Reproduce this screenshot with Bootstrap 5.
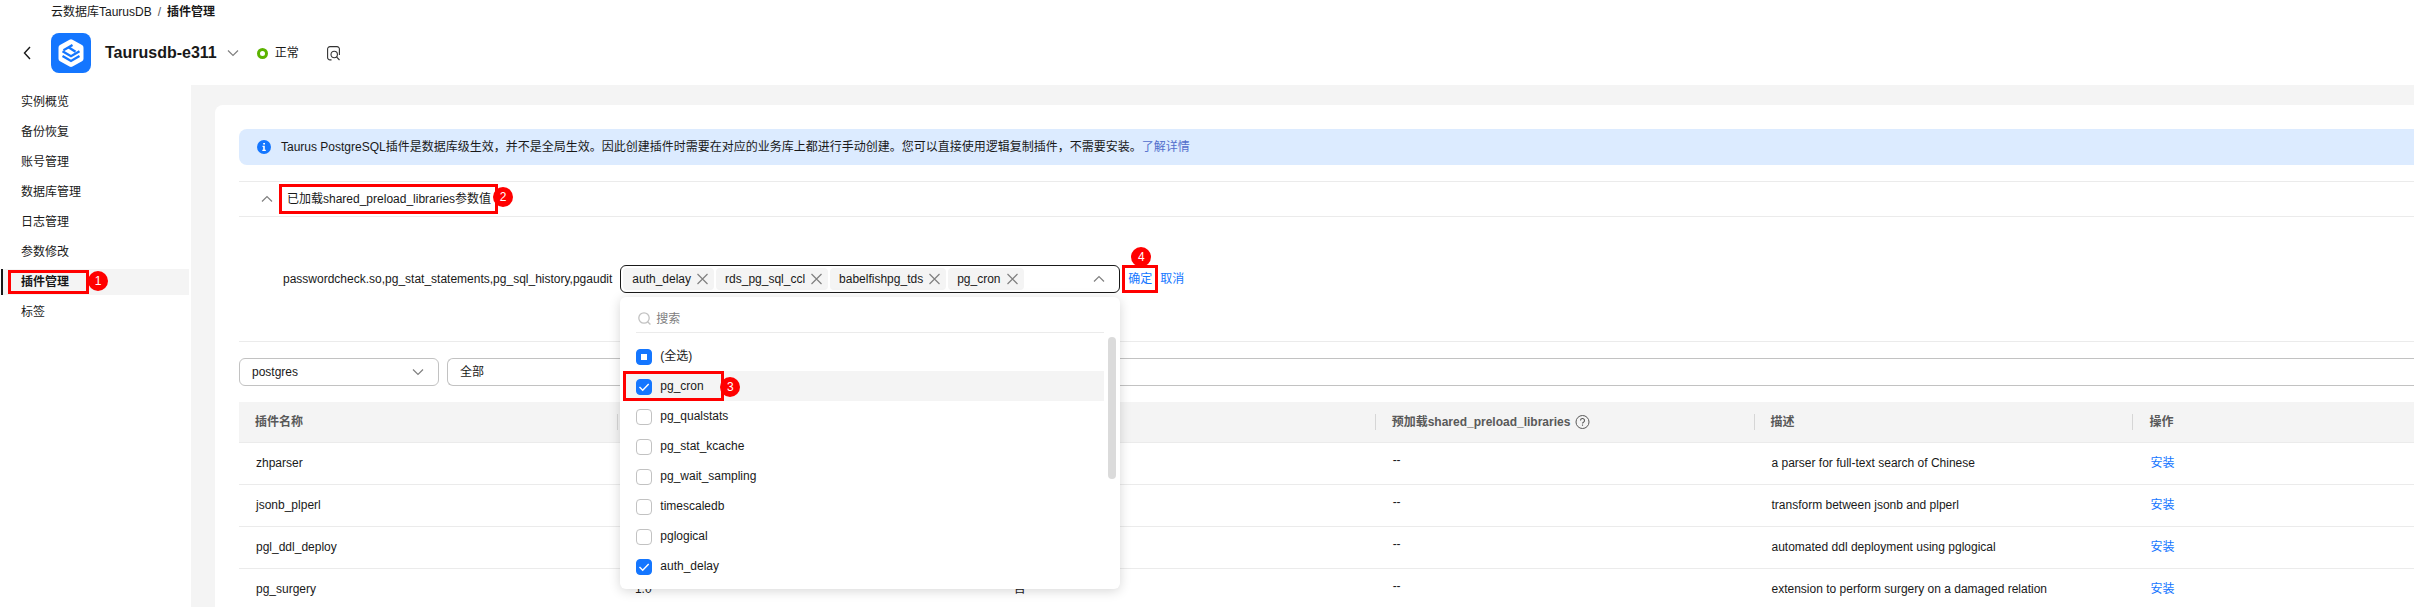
<!DOCTYPE html>
<html lang="zh-CN">
<head>
<meta charset="utf-8">
<meta name="viewport" content="width=device-width, initial-scale=1">
<title>插件管理 - 云数据库TaurusDB</title>
<link href="https://cdn.jsdelivr.net/npm/bootstrap@5.3.0/dist/css/bootstrap.min.css" rel="stylesheet">
<style>
  :root { --ink: #191919; --line: #ebebeb; --pane: #f4f4f4; --brand: #1476ff; --ctl: #c2c2c2; }
  body { font: 12px/20px "Liberation Sans", "Noto Sans CJK SC", sans-serif; color: var(--ink); background: #fff; }
  a, .link-btn { color: var(--brand); text-decoration: none; }
  svg { display: block; flex: none; }
  .link-btn { border: 0; background: none; padding: 0; font-size: 12px; line-height: 20px; }
  .icon-btn { border: 0; background: none; padding: 0; color: #808080; }

  .top-bar { padding: 2px 24px 12px 23px; }
  .crumbs { padding-left: 28px; margin-bottom: 11px; }
  .crumbs a { color: var(--ink); }
  .crumbs span { padding: 0 6px; color: #595959; }
  .inst-row { height: 40px; }
  .inst-logo { margin-left: 20px; }
  .inst-name { font-size: 16px; line-height: 24px; margin: 0 10px 0 14px; font-weight: 700; }
  .state-dot { width: 11px; height: 11px; border: 3px solid #5cb300; border-radius: 50%; margin: 0 7px 0 18px; }
  .query-btn { margin-left: 28px; }

  .body-row { min-height: 0; }
  .side { width: 191px; padding: 4px 2px 0 1px; flex: none; }
  .side a { display: flex; align-items: center; height: 26px; margin: 0 0 4px; padding-left: 18px; border-left: 2px solid transparent; color: var(--ink); }
  .side a.on { background: var(--pane); border-left-color: var(--ink); font-weight: 700; }
  .work { background: var(--pane); padding: 20px 0 0 24px; min-width: 0; }
  .sheet { background: #fff; border-top-left-radius: 8px; padding: 24px 0 0 24px; }
  .notice { height: 36px; background: #dcebff; border-radius: 8px 0 0 8px; padding-left: 18px; gap: 10px; margin-bottom: 16px; }
  .notice a { color: #526ecc; }

  .fold-head { height: 36px; border-top: 1px solid var(--line); border-bottom: 1px solid var(--line); padding-left: 22px; gap: 14px; }
  .fold-body { height: 125px; border-bottom: 1px solid var(--line); padding-left: 44px; gap: 8px; }
  .picker { width: 500px; }
  .picker-box { height: 28px; border: 1px solid var(--ink); border-radius: 6px; padding: 2px 14px 2px 2px; gap: 2px; cursor: pointer; }
  .chip { height: 22px; background: var(--pane); border-radius: 4px; padding: 0 6px 0 9px; gap: 6px; }
  .drop { position: absolute; top: 32px; left: 0; right: 0; z-index: 5; height: 292px; background: #fff; border-radius: 6px; box-shadow: 0 2px 12px rgba(0,0,0,.16); padding: 8px 16px 0; }
  .drop-search { height: 28px; border-bottom: 1px solid var(--line); gap: 5px; padding-left: 2px; }
  .drop-search input { border: 0; padding: 0; outline: 0; flex: 1; line-height: 20px; }
  .drop-search input::placeholder { color: #808080; }
  .opt { height: 30px; margin: 0; gap: 8px; }
  .opt.hot { background: var(--pane); margin-left: -13px; padding-left: 13px; }
  .opt .form-check-input { width: 16px; height: 16px; margin: 2px 0 0; border: 1px solid var(--ctl); border-radius: 4px; flex: none; }
  .opt .form-check-input:checked, .opt .form-check-input:indeterminate { background-color: var(--brand); border-color: var(--brand); background-size: 16px 16px; background-position: center; }
  .opt .form-check-input:checked { background-image: url("data:image/svg+xml,%3Csvg xmlns='http://www.w3.org/2000/svg' viewBox='0 0 16 16'%3E%3Cpath d='M3.5 8l3.2 3.3 6-6.4' fill='none' stroke='%23fff' stroke-width='1.4'/%3E%3C/svg%3E"); }
  .opt .form-check-input:indeterminate { background-image: url("data:image/svg+xml,%3Csvg xmlns='http://www.w3.org/2000/svg' viewBox='0 0 16 16'%3E%3Cpath d='M5 5h6v6H5z' fill='%23fff'/%3E%3C/svg%3E"); }
  .thumb { position: absolute; right: 4px; top: 40px; width: 8px; height: 142px; border-radius: 4px; background: #dbdbdb; }

  .filters { margin: 16px 0; gap: 8px; }
  .filters .form-select { height: 28px; border: 1px solid var(--ctl); border-radius: 6px; padding: 3px 36px 3px 12px; font-size: 12px; line-height: 20px; color: var(--ink);
    background-image: url("data:image/svg+xml,%3Csvg xmlns='http://www.w3.org/2000/svg' viewBox='0 0 12 12'%3E%3Cpath d='M1 3.5l5 5 5-5' fill='none' stroke='%23808080' stroke-width='1.2'/%3E%3C/svg%3E"); background-size: 12px; background-position: right 14px center; }
  .filters .db-pick { width: 200px; flex: none; }
  .filters .type-pick { border-right: 0; border-radius: 6px 0 0 6px; background-image: none; }

  .plugins { table-layout: fixed; margin: 0; color: var(--ink); }
  .plugins th { background: var(--pane); color: #595959; height: 40px; padding: 0 16px; vertical-align: middle; border-bottom: 1px solid var(--line); position: relative; }
  .plugins th:not(:last-child)::after { content: ""; position: absolute; right: 0; top: 12px; height: 16px; width: 1px; background: #d6d6d6; }
  .plugins td { height: 42px; padding: 0 17px; vertical-align: middle; border-bottom: 1px solid var(--line); }
  .plugins td.none { padding-bottom: 6px; }
  .col-std { width: 17.42%; }

  /* numbered red callouts for the tutorial steps */
  .step { position: relative; }
  .step-frame { position: absolute; border: 3px solid #f00; z-index: 7; pointer-events: none; }
  .step-num { position: absolute; z-index: 6; width: 20px; height: 20px; border-radius: 50%; background: #f00; color: #fff; text-align: center; font-weight: 400; font-size: 12px; line-height: 20px; }
  .f1 { left: 5px; right: 100px; top: 1px; bottom: 1px; } .n1 { left: 85px; top: 2px; }
  .f2 { left: -8px; right: -7px; top: -5px; bottom: -5px; } .n2 { right: -22px; top: -2px; }
  .f3 { left: 0; width: 101px; top: 0; bottom: 0; } .n3 { left: 97px; top: 6px; }
  .f4 { left: -6px; right: -6px; top: -4px; bottom: -4px; } .n4 { left: 3px; top: -22px; }
</style>
</head>
<body>
<div class="d-flex flex-column vh-100 overflow-hidden">
  <header class="top-bar">
    <nav class="crumbs d-flex" aria-label="breadcrumb"><a href="#">云数据库TaurusDB</a><span>/</span><strong>插件管理</strong></nav>
    <div class="inst-row d-flex align-items-center">
      <button class="icon-btn" aria-label="返回"><svg width="8" height="14" viewBox="0 0 8 14" fill="none" stroke="#191919" stroke-width="1.4"><path d="M7 1L1.500 7 7 13"/></svg></button>
      <svg class="inst-logo" width="40" height="40" viewBox="0 0 40 40"><rect width="40" height="40" rx="8" fill="#1476ff"/><path d="M18.500 6.700q1.500-.9 3 0l9.500 5.400q1.500.9 1.500 2.600v11q0 1.700-1.500 2.600L21.500 33.500q-1.500.9-3 0L9 28.300q-1.500-.9-1.500-2.600v-11q0-1.700 1.500-2.600z" fill="#fff"/><g fill="none" stroke="#1476ff" stroke-width="2.300"><path d="M11.500 18.200l8.500 5 8.500-5M11.500 22.900l8.500 5 8.500-5"/><path d="M12.500 17.200l9-5.200" stroke-width="2.400"/><path d="M17.500 14.200l7 4.600" stroke-width="2.400"/></g></svg>
      <h1 class="inst-name">Taurusdb-e311</h1>
      <button class="icon-btn" aria-label="切换实例"><svg width="12" height="8" viewBox="0 0 12 8" fill="none" stroke="#808080" stroke-width="1.200"><path d="M1 1.500l5 5 5-5"/></svg></button>
      <span class="state-dot"></span><span>正常</span>
      <button class="icon-btn query-btn" aria-label="查询"><svg width="13" height="15" viewBox="0 0 13 15" fill="none" stroke="#333" stroke-width="1.100"><path d="M4.500 13.900H3a2.400 2.400 0 0 1-2.400-2.400V3A2.400 2.400 0 0 1 3 .6h7A2.400 2.400 0 0 1 12.400 3v6"/><circle cx="7.200" cy="8.500" r="3.200"/><path d="M9.500 10.800l3 3.200"/></svg></button>
    </div>
  </header>
  <div class="body-row d-flex flex-grow-1">
    <nav class="side">
      <a href="#">实例概览</a>
      <a href="#">备份恢复</a>
      <a href="#">账号管理</a>
      <a href="#">数据库管理</a>
      <a href="#">日志管理</a>
      <a href="#">参数修改</a>
      <a href="#" class="on step" aria-current="page">插件管理<span class="step-num n1">1</span><span class="step-frame f1"></span></a>
      <a href="#">标签</a>
    </nav>
    <main class="work flex-grow-1">
      <div class="sheet">
        <div class="notice d-flex align-items-center">
          <svg width="14" height="14" viewBox="0 0 14 14"><circle cx="7" cy="7" r="7" fill="#1476ff"/><path d="M6.200 3h1.800v1.500H6.200zM5.500 5.800h2.300v4h1v1.200H5.300V9.800h.9V7h-.7z" fill="#fff"/></svg>
          <span>Taurus PostgreSQL插件是数据库级生效，并不是全局生效。因此创建插件时需要在对应的业务库上都进行手动创建。您可以直接使用逻辑复制插件，不需要安装。<a href="#">了解详情</a></span>
        </div>
        <div class="fold-head d-flex align-items-center">
          <button class="icon-btn" aria-label="收起"><svg width="12" height="8" viewBox="0 0 12 8" fill="none" stroke="#808080" stroke-width="1.200"><path d="M1 6.500l5-5 5 5"/></svg></button>
          <span class="step">已加载shared_preload_libraries参数值<span class="step-num n2">2</span><span class="step-frame f2"></span></span>
        </div>
        <div class="fold-body d-flex align-items-center">
          <span>passwordcheck.so,pg_stat_statements,pg_sql_history,pgaudit</span>
          <div class="picker position-relative">
            <div class="picker-box d-flex align-items-center" role="combobox" aria-expanded="true" aria-label="预加载库" tabindex="0">
              <span class="chip d-flex align-items-center">auth_delay<button class="icon-btn" aria-label="移除 auth_delay"><svg width="11" height="12" viewBox="0 0 11 12" stroke="#808080" stroke-width="1.200"><path d="M.5 1l10 10M10.500 1l-10 10"/></svg></button></span>
              <span class="chip d-flex align-items-center">rds_pg_sql_ccl<button class="icon-btn" aria-label="移除 rds_pg_sql_ccl"><svg width="11" height="12" viewBox="0 0 11 12" stroke="#808080" stroke-width="1.200"><path d="M.5 1l10 10M10.500 1l-10 10"/></svg></button></span>
              <span class="chip d-flex align-items-center">babelfishpg_tds<button class="icon-btn" aria-label="移除 babelfishpg_tds"><svg width="11" height="12" viewBox="0 0 11 12" stroke="#808080" stroke-width="1.200"><path d="M.5 1l10 10M10.500 1l-10 10"/></svg></button></span>
              <span class="chip d-flex align-items-center">pg_cron<button class="icon-btn" aria-label="移除 pg_cron"><svg width="11" height="12" viewBox="0 0 11 12" stroke="#808080" stroke-width="1.200"><path d="M.5 1l10 10M10.500 1l-10 10"/></svg></button></span>
              <svg class="ms-auto" width="12" height="8" viewBox="0 0 12 8" fill="none" stroke="#808080" stroke-width="1.200"><path d="M1 6.500l5-5 5 5"/></svg>
            </div>
            <div class="drop">
              <label class="drop-search d-flex align-items-center"><svg width="13" height="13" viewBox="0 0 13 13" fill="none" stroke="#c2c2c2" stroke-width="1.300"><circle cx="6" cy="6" r="5.200"/><path d="M9.600 9.800l2.800 2.700"/></svg><input type="text" placeholder="搜索" aria-label="搜索"></label>
              <div class="pt-2">
                <label class="opt d-flex align-items-center"><input class="form-check-input" type="checkbox" id="optAll"><span>(全选)</span></label>
                <label class="opt hot step d-flex align-items-center"><input class="form-check-input" type="checkbox" checked><span>pg_cron</span><span class="step-num n3">3</span><span class="step-frame f3"></span></label>
                <label class="opt d-flex align-items-center"><input class="form-check-input" type="checkbox"><span>pg_qualstats</span></label>
                <label class="opt d-flex align-items-center"><input class="form-check-input" type="checkbox"><span>pg_stat_kcache</span></label>
                <label class="opt d-flex align-items-center"><input class="form-check-input" type="checkbox"><span>pg_wait_sampling</span></label>
                <label class="opt d-flex align-items-center"><input class="form-check-input" type="checkbox"><span>timescaledb</span></label>
                <label class="opt d-flex align-items-center"><input class="form-check-input" type="checkbox"><span>pglogical</span></label>
                <label class="opt d-flex align-items-center"><input class="form-check-input" type="checkbox" checked><span>auth_delay</span></label>
              </div>
              <span class="thumb"></span>
            </div>
          </div>
          <button class="link-btn step">确定<span class="step-num n4">4</span><span class="step-frame f4"></span></button>
          <button class="link-btn">取消</button>
        </div>
        <div class="filters d-flex">
          <select class="form-select db-pick" aria-label="数据库"><option>postgres</option></select>
          <select class="form-select type-pick" aria-label="类型"><option>全部</option></select>
        </div>
        <table class="table plugins">
          <colgroup><col class="col-std"><col class="col-std"><col class="col-std"><col class="col-std"><col class="col-std"><col></colgroup>
          <thead><tr><th>插件名称</th><th></th><th></th>
            <th><span class="d-flex align-items-center">预加载shared_preload_libraries<svg class="ms-1" width="16" height="16" viewBox="0 0 16 16" fill="none" stroke="#595959"><circle cx="8.500" cy="8" r="6.500"/><path d="M6.500 6.500a2 2 0 1 1 3 1.700q-1 .5-1 1.400M8.500 10.600v1.200" stroke-width="1.100"/></svg></span></th>
            <th>描述</th><th>操作</th></tr></thead>
          <tbody>
            <tr><td>zhparser</td><td></td><td></td><td class="none">--</td><td>a parser for full-text search of Chinese</td><td><a href="#">安装</a></td></tr>
            <tr><td>jsonb_plperl</td><td></td><td></td><td class="none">--</td><td>transform between jsonb and plperl</td><td><a href="#">安装</a></td></tr>
            <tr><td>pgl_ddl_deploy</td><td></td><td></td><td class="none">--</td><td>automated ddl deployment using pglogical</td><td><a href="#">安装</a></td></tr>
            <tr><td>pg_surgery</td><td>1.0</td><td>否</td><td class="none">--</td><td>extension to perform surgery on a damaged relation</td><td><a href="#">安装</a></td></tr>
          </tbody>
        </table>
      </div>
    </main>
  </div>
</div>
<script src="https://cdn.jsdelivr.net/npm/bootstrap@5.3.0/dist/js/bootstrap.bundle.min.js"></script>
<script>document.getElementById('optAll').indeterminate = true;</script>
</body>
</html>
